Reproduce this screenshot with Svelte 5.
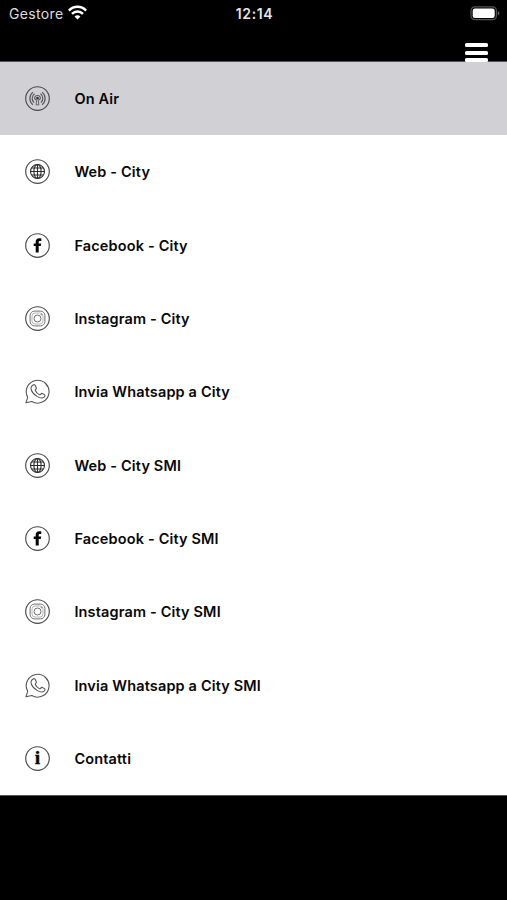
<script>
  const items = [
    { icon: 'air', label: 'On Air' },
    { icon: 'web', label: 'Web - City' },
    { icon: 'facebook', label: 'Facebook - City' },
    { icon: 'instagram', label: 'Instagram - City' },
    { icon: 'whatsapp', label: 'Invia Whatsapp a City' },
    { icon: 'web', label: 'Web - City SMI' },
    { icon: 'facebook', label: 'Facebook - City SMI' },
    { icon: 'instagram', label: 'Instagram - City SMI' },
    { icon: 'whatsapp', label: 'Invia Whatsapp a City SMI' },
    { icon: 'info', label: 'Contatti' }
  ];
  let selected = $state(0);
</script>

<div class="screen">
  <header>
    <div class="status">
      <div class="carrier">
        <span>Gestore</span>
        <svg width="19" height="15" viewBox="0 0 18 14" fill="none" stroke="#fff" stroke-width="2.3">
          <path d="M0.8 5.2C5.5 .4 12.5 .4 17.2 5.2" />
          <path d="M3.8 8.2C6.8 5.3 11.2 5.3 14.2 8.2" />
          <path d="M6.2 10.8Q9 8.3 11.8 10.8L9 13.6Z" fill="#fff" stroke="none" />
        </svg>
      </div>
      <span class="time">12:14</span>
      <div class="power">
        <svg width="30" height="15" viewBox="0 0 30 15">
          <rect x="1" y=".8" width="25.4" height="12.8" rx="3.8" fill="none" stroke="#555" stroke-width="1.2" />
          <rect x="2.7" y="2.5" width="22" height="9.4" rx="2.2" fill="#fff" />
          <path d="M27.8 5v4.6q1.6-.7 1.6-2.3t-1.6-2.3Z" fill="#666" />
        </svg>
      </div>
    </div>
    <button class="menu" aria-label="Menu"><i></i><i></i><i></i></button>
  </header>

  <ul>
    {#each items as item, i}
      <li class:active={i === selected}>
        <button class="row" onclick={() => (selected = i)}>
          <svg class="icon" viewBox="0.5 0.5 25 25" fill="none" stroke="#555" stroke-width="1">
            {#if item.icon !== 'whatsapp'}
              <circle cx="13" cy="13" r="11.8" stroke-width="1.15" stroke="#4a4a4c" />
            {/if}
            {#if item.icon === 'air'}
              <g stroke="#58585b" stroke-width="1.2">
                <path d="M8.4 6.6C4.4 10 4.4 15.8 8.4 19.2M17.6 6.6C21.6 10 21.6 15.8 17.6 19.2" />
                <path d="M10 8.3C7 10.8 7 14.6 9.6 17.2M16 8.3C19 10.8 19 14.6 16.4 17.2" />
                <path d="M11.2 14.4C9.3 13 10 10 13 10s3.7 3 1.8 4.4" />
                <path d="M12.4 13L11.6 19.4H14.4L13.6 13" stroke-width=".9" />
              </g>
              <circle cx="13" cy="12.5" r="1.3" fill="#333" stroke="none" />
            {:else if item.icon === 'web'}
              <g stroke="#2c2c2c" stroke-width="1.1">
                <circle cx="13" cy="13" r="7" />
                <ellipse cx="13" cy="13" rx="3.6" ry="7" />
                <path d="M13 6v14M6 13h14M7.3 9.5h11.4M7.3 16.5h11.4" />
              </g>
            {:else if item.icon === 'facebook'}
              <path
                d="M11.2 19.9v-6.4H9.2v-2.6h2V9.3c0-2.4 1.3-3.6 3.5-3.6.8 0 1.6.1 2.1.2v2.5h-1.3c-1 0-1.3.5-1.3 1.3v1.2h2.5l-.4 2.6h-2.1v6.4Z"
                fill="#050505" stroke="none" />
            {:else if item.icon === 'instagram'}
              <g stroke="#707070" stroke-width="1">
                <rect x="5.6" y="5.6" width="14.8" height="14.8" rx="4.4" />
                <rect x="7.5" y="7.5" width="11" height="11" rx="3.1" stroke="#999" stroke-width=".7" />
                <circle cx="13" cy="13" r="3.5" />
                <circle cx="17" cy="9.1" r=".5" stroke-width=".7" />
              </g>
            {:else if item.icon === 'whatsapp'}
              <path stroke="#555" stroke-width="1.1"
                d="M1.4 24.3L3.2 18.8A11.4 11.4 0 1 1 7.3 23Z" stroke-linejoin="round" />
              <path stroke="#555" stroke-width="1.1"
                d="M8.5 6.5C9.6 5.8 10.4 6.2 10.9 7.2L11.8 9.2C12.3 10.4 10.7 11 10.8 12C11.6 13.9 13.3 15.5 15.1 16.2C16.2 16.2 16.5 14.5 17.8 14.9L20 16.1C20.8 16.7 20.4 17.8 19.6 18.6C17.7 20.2 15.2 19.5 12.5 17.9C9.5 16 6.8 12.6 6.5 9.9C6.4 8.4 7.2 7.2 8.5 6.5Z" />
            {:else}
              <text x="13" y="18.9" text-anchor="middle" fill="#050505" stroke="#050505" stroke-width=".4">i</text>
            {/if}
          </svg>
          <span>{item.label}</span>
        </button>
      </li>
    {/each}
  </ul>
</div>

<style>
  :global(body) { margin: 0; background: #000; }
  .screen {
    width: 507px;
    height: 900px;
    overflow: hidden;
    background: #000;
    font-family: Inter, "Liberation Sans", sans-serif;
  }
  header { height: 62px; color: #fff; overflow: hidden; }
  .status {
    display: grid;
    grid-template-columns: 1fr auto 1fr;
    align-items: center;
    height: 26px;
    padding: 0 7px 0 9px;
    box-sizing: border-box;
  }
  .carrier { display: flex; align-items: center; gap: 4px; font-size: 14px; letter-spacing: .35px; color: #ddd; }
  .carrier svg { margin-top: -1px; }
  .time { font-size: 14px; font-weight: 600; letter-spacing: .6px; color: #e6e6e6; }
  .power { display: flex; justify-content: flex-end; }
  .menu {
    display: flex;
    flex-direction: column;
    gap: 3.7px;
    margin: 17px 19px 0 auto;
    padding: 0;
    border: 0;
    background: none;
  }
  .menu i { width: 23px; height: 4px; border-radius: 1.5px; background: #fff; }
  ul {
    list-style: none;
    margin: 0;
    padding: 0;
    height: 733px;
    display: flex;
    flex-direction: column;
    background: #fff;
    box-shadow: 0 0 0 1px #555;
  }
  li { flex: 1; display: flex; }
  .active { background: #d1d0d5; }
  .row {
    flex: 1;
    display: flex;
    align-items: center;
    gap: 24.4px;
    padding: 0 0 0 25px;
    border: 0;
    background: none;
    font: 600 14.5px Inter, "Liberation Sans", sans-serif;
    letter-spacing: .15px;
    color: #080808;
    text-align: left;
  }
  .icon { width: 25px; height: 25px; flex: none; }
  .icon text { font: 700 19.5px "Liberation Serif", serif; letter-spacing: 0; }
</style>
